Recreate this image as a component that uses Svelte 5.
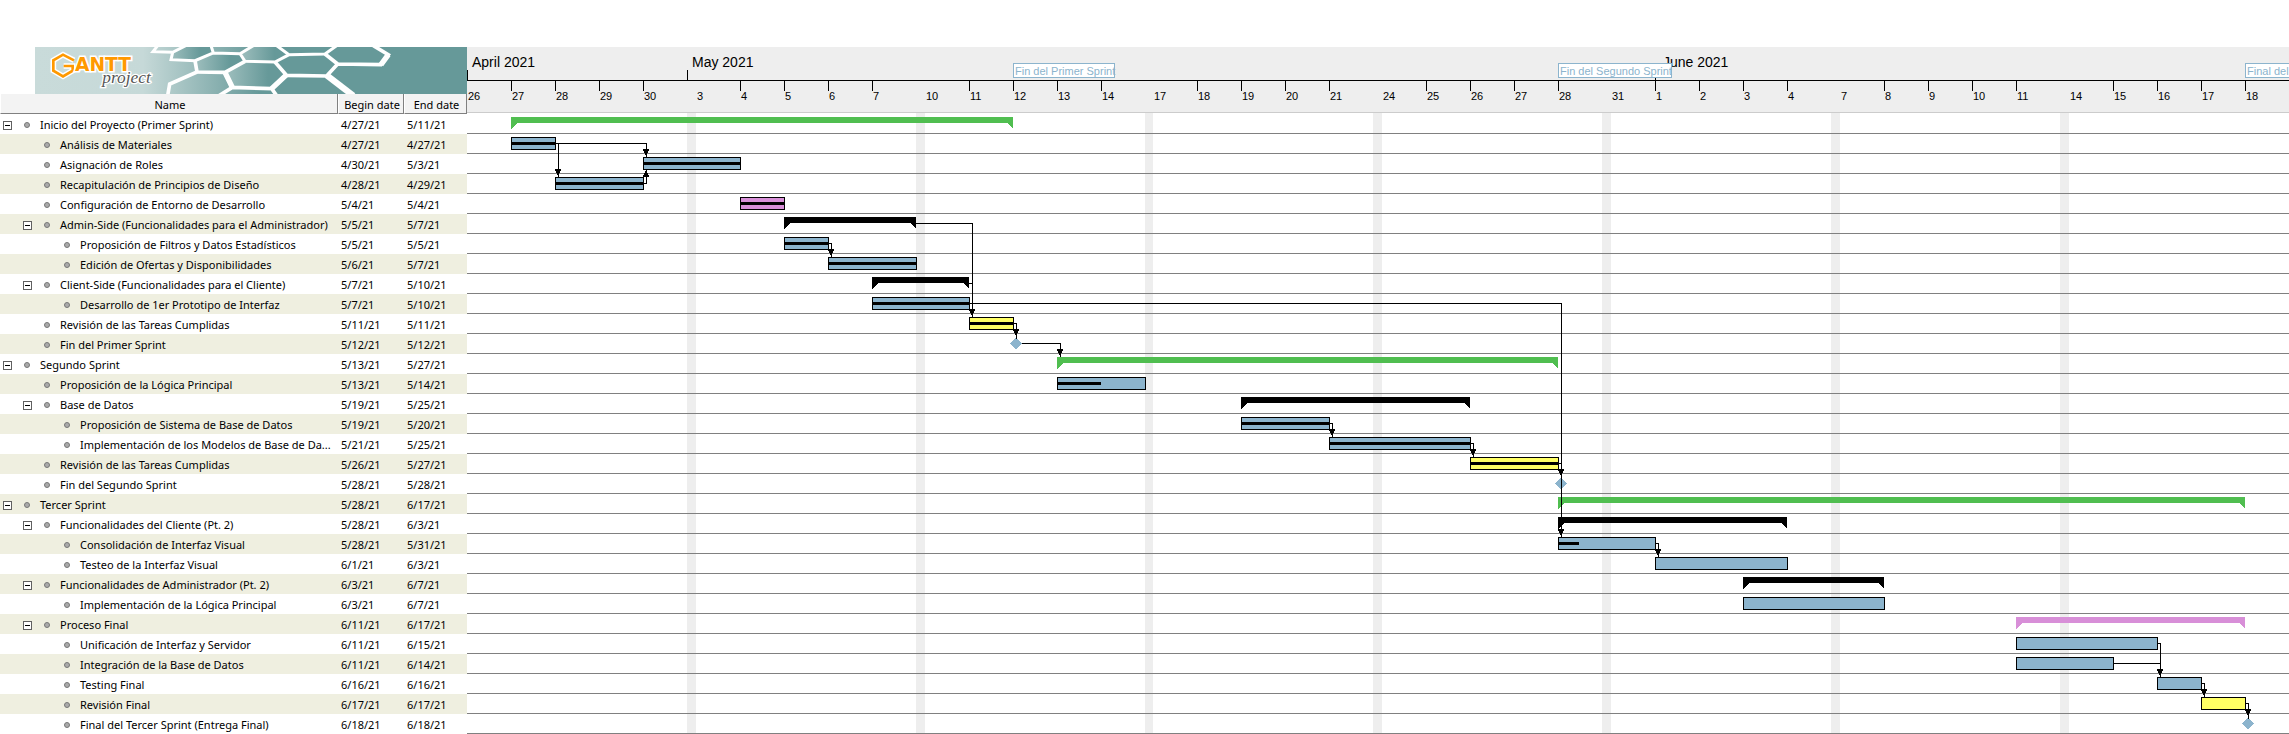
<script>
  const DAY = 44;
  const WEEK = 228.8;
  const ROW = 20;
  const TOP = 67;

  // Position of a working day: week index counted from April 26, day 0 = Monday, day 5 = start of the weekend.
  const at = (week, day) => Math.round(week * WEEK + day * DAY);

  // kind: sum = summary bracket, bar = task bar, mile = milestone
  const tasks = [
    { name: 'Inicio del Proyecto (Primer Sprint)', b: '4/27/21', e: '5/11/21', level: 0, open: true, kind: 'sum', color: 'green', s: [0, 1], f: [2, 2] },
    { name: 'Análisis de Materiales', b: '4/27/21', e: '4/27/21', level: 1, kind: 'bar', color: 'blue', s: [0, 1], f: [0, 2], done: 1 },
    { name: 'Asignación de Roles', b: '4/30/21', e: '5/3/21', level: 1, kind: 'bar', color: 'blue', s: [0, 4], f: [1, 1], done: 1 },
    { name: 'Recapitulación de Principios de Diseño', b: '4/28/21', e: '4/29/21', level: 1, kind: 'bar', color: 'blue', s: [0, 2], f: [0, 4], done: 1 },
    { name: 'Configuración de Entorno de Desarrollo', b: '5/4/21', e: '5/4/21', level: 1, kind: 'bar', color: 'pink', s: [1, 1], f: [1, 2], done: 1 },
    { name: 'Admin-Side (Funcionalidades para el Administrador)', b: '5/5/21', e: '5/7/21', level: 1, open: true, kind: 'sum', color: 'black', s: [1, 2], f: [1, 5] },
    { name: 'Proposición de Filtros y Datos Estadísticos', b: '5/5/21', e: '5/5/21', level: 2, kind: 'bar', color: 'blue', s: [1, 2], f: [1, 3], done: 1 },
    { name: 'Edición de Ofertas y Disponibilidades', b: '5/6/21', e: '5/7/21', level: 2, kind: 'bar', color: 'blue', s: [1, 3], f: [1, 5], done: 1 },
    { name: 'Client-Side (Funcionalidades para el Cliente)', b: '5/7/21', e: '5/10/21', level: 1, open: true, kind: 'sum', color: 'black', s: [1, 4], f: [2, 1] },
    { name: 'Desarrollo de 1er Prototipo de Interfaz', b: '5/7/21', e: '5/10/21', level: 2, kind: 'bar', color: 'blue', s: [1, 4], f: [2, 1], done: 1 },
    { name: 'Revisión de las Tareas Cumplidas', b: '5/11/21', e: '5/11/21', level: 1, kind: 'bar', color: 'yellow', s: [2, 1], f: [2, 2], done: 1 },
    { name: 'Fin del Primer Sprint', b: '5/12/21', e: '5/12/21', level: 1, kind: 'mile', color: 'blue', s: [2, 2], f: [2, 2] },
    { name: 'Segundo Sprint', b: '5/13/21', e: '5/27/21', level: 0, open: true, kind: 'sum', color: 'green', s: [2, 3], f: [4, 4] },
    { name: 'Proposición de la Lógica Principal', b: '5/13/21', e: '5/14/21', level: 1, kind: 'bar', color: 'blue', s: [2, 3], f: [2, 5], done: 0.5 },
    { name: 'Base de Datos', b: '5/19/21', e: '5/25/21', level: 1, open: true, kind: 'sum', color: 'black', s: [3, 2], f: [4, 2] },
    { name: 'Proposición de Sistema de Base de Datos', b: '5/19/21', e: '5/20/21', level: 2, kind: 'bar', color: 'blue', s: [3, 2], f: [3, 4], done: 1 },
    { name: 'Implementación de los Modelos de Base de Da...', b: '5/21/21', e: '5/25/21', level: 2, kind: 'bar', color: 'blue', s: [3, 4], f: [4, 2], done: 1 },
    { name: 'Revisión de las Tareas Cumplidas', b: '5/26/21', e: '5/27/21', level: 1, kind: 'bar', color: 'yellow', s: [4, 2], f: [4, 4], done: 1 },
    { name: 'Fin del Segundo Sprint', b: '5/28/21', e: '5/28/21', level: 1, kind: 'mile', color: 'blue', s: [4, 4], f: [4, 4] },
    { name: 'Tercer Sprint', b: '5/28/21', e: '6/17/21', level: 0, open: true, kind: 'sum', color: 'green', s: [4, 4], f: [7, 4] },
    { name: 'Funcionalidades del Cliente (Pt. 2)', b: '5/28/21', e: '6/3/21', level: 1, open: true, kind: 'sum', color: 'black', s: [4, 4], f: [5, 4] },
    { name: 'Consolidación de Interfaz Visual', b: '5/28/21', e: '5/31/21', level: 2, kind: 'bar', color: 'blue', s: [4, 4], f: [5, 1], done: 0.22 },
    { name: 'Testeo de la Interfaz Visual', b: '6/1/21', e: '6/3/21', level: 2, kind: 'bar', color: 'blue', s: [5, 1], f: [5, 4], done: 0 },
    { name: 'Funcionalidades de Administrador (Pt. 2)', b: '6/3/21', e: '6/7/21', level: 1, open: true, kind: 'sum', color: 'black', s: [5, 3], f: [6, 1] },
    { name: 'Implementación de la Lógica Principal', b: '6/3/21', e: '6/7/21', level: 2, kind: 'bar', color: 'blue', s: [5, 3], f: [6, 1], done: 0 },
    { name: 'Proceso Final', b: '6/11/21', e: '6/17/21', level: 1, open: true, kind: 'sum', color: 'pink', s: [6, 4], f: [7, 4] },
    { name: 'Unificación de Interfaz y Servidor', b: '6/11/21', e: '6/15/21', level: 2, kind: 'bar', color: 'blue', s: [6, 4], f: [7, 2], done: 0 },
    { name: 'Integración de la Base de Datos', b: '6/11/21', e: '6/14/21', level: 2, kind: 'bar', color: 'blue', s: [6, 4], f: [7, 1], done: 0 },
    { name: 'Testing Final', b: '6/16/21', e: '6/16/21', level: 2, kind: 'bar', color: 'blue', s: [7, 2], f: [7, 3], done: 0 },
    { name: 'Revisión Final', b: '6/17/21', e: '6/17/21', level: 2, kind: 'bar', color: 'yellow', s: [7, 3], f: [7, 4], done: 0 },
    { name: 'Final del Tercer Sprint (Entrega Final)', b: '6/18/21', e: '6/18/21', level: 2, kind: 'mile', color: 'blue', s: [7, 4], f: [7, 4] }
  ];

  const items = tasks.map((t, i) => ({ ...t, x1: at(...t.s), x2: at(...t.f), y: TOP + i * ROW }));

  // Dependencies as [from row, to row]
  const links = [
    [1, 2], [1, 3], [3, 2], [5, 10], [6, 7], [8, 10], [9, 21], [10, 11], [11, 12],
    [15, 16], [16, 17], [17, 18], [21, 22], [26, 28], [27, 28], [28, 29], [29, 30]
  ].map(([from, to]) => {
    const a = items[from];
    const b = items[to];
    const x = b.x1 + 3;
    const y = a.y + 9;
    const start = a.kind === 'mile' ? a.x2 + 9 : a.x2;
    const down = to > from;
    const end = down ? b.y + (b.kind === 'mile' ? 5 : 3) : b.y + 16;
    const tip = down
      ? `M${x - 3} ${b.y - 5}h6v2h-1l-1 4h-2l-1 -4h-1z`
      : `M${x - 3} ${b.y + 23}h6v-2h-1l-1 -4h-2l-1 4h-1z`;
    return { line: `M${start} ${y + 0.5}H${x + 0.5}V${end}`, tip };
  });

  const dayNumbers = [
    [26, 27, 28, 29, 30], [3, 4, 5, 6, 7], [10, 11, 12, 13, 14], [17, 18, 19, 20, 21],
    [24, 25, 26, 27, 28], [31, 1, 2, 3, 4], [7, 8, 9, 10, 11], [14, 15, 16, 17, 18]
  ];
  const days = dayNumbers.flatMap((week, w) => week.map((n, d) => ({ n, x: at(w, d), tick: d > 0 })));
  const weekends = [0, 1, 2, 3, 4, 5, 6].map((w) => ({ x: at(w, 5), w: at(w + 1, 0) - at(w, 5) }));
  const months = [
    { name: 'April 2021', x: 0, text: 5 },
    { name: 'May 2021', x: at(0, 5), text: at(0, 5) + 5 },
    { name: 'June 2021', x: at(5, 1), text: at(5, 1) + 8 }
  ];
  const flags = [
    { name: 'Fin del Primer Sprint', x: at(2, 2), w: 101 },
    { name: 'Fin del Segundo Sprint', x: at(4, 4), w: 113 },
    { name: 'Final del Tercer Sprint (Entrega Final)', x: at(7, 4), w: 190 }
  ];
</script>

<main>
  <section class="tree">
    <svg class="banner" viewBox="-330 9 1296 141" preserveAspectRatio="none" role="img" aria-label="GanttProject">
      <defs>
        <linearGradient id="sea" x1="0" x2="1">
          <stop offset="0" stop-color="#c9dbda" />
          <stop offset="0.25" stop-color="#c6d9d8" />
          <stop offset="0.52" stop-color="#669999" />
          <stop offset="1" stop-color="#669999" />
        </linearGradient>
        <linearGradient id="cell" x1="0" x2="1">
          <stop offset="0" stop-color="#9fbfbe" />
          <stop offset="0.7" stop-color="#669999" />
        </linearGradient>
      </defs>
      <rect x="-330" y="9" width="1296" height="141" fill="url(#sea)" />
      <g fill="url(#cell)">
        <path d="M83 27L115 9H200L205 27L150 50L77 48Z" />
        <path d="M150 50L205 27L285 29L300 52L240 85L158 84Z" />
        <path d="M285 29L320 9H400L432 32L390 54L300 52Z" />
        <path d="M240 85L300 52L390 54L425 92L380 134L262 130Z" />
      </g>
      <g fill="none" stroke="#fff" stroke-width="11" stroke-linejoin="miter">
        <path d="M38 5L24 23L83 25L122 5M83 25L78 47L150 50L205 27L198 5M205 27L285 29L325 5M285 29L300 52L390 54L432 32L395 5M432 32L540 30L575 5" stroke-width="9" />
        <path d="M150 50L156 84L240 85L300 52M390 54L425 94L545 96L578 60L540 30M578 60L708 62L730 32L685 5" />
        <path d="M156 84L74 120L68 155M240 85L262 130L380 134L425 92M262 130L222 155M380 134L395 155" />
        <path d="M545 94L625 155" stroke-width="19" />
        <path d="M425 92L380 134M708 62L730 32M240 85L262 130" stroke-width="16" />
      </g>
      <g transform="translate(-330 0)">
        <path d="M117 49L84 32L55 49V80L84 97L113 80V66H86" fill="none" stroke="#fff" stroke-width="17" />
        <path d="M117 49L84 32L55 49V80L84 97L113 80V66H86" fill="none" stroke="#ff9900" stroke-width="8" />
        <text class="word" x="120" y="80">ANTT</text>
        <text class="script" x="202" y="116">project</text>
      </g>
    </svg>

    <table>
      <colgroup>
        <col />
        <col class="begin" />
        <col class="end" />
      </colgroup>
      <thead>
        <tr><th scope="col">Name</th><th scope="col">Begin date</th><th scope="col">End date</th></tr>
      </thead>
      <tbody>
        {#each tasks as t}
          <tr>
            <td>
              <div class="task level{t.level}">
                {#if t.open}
                  <button type="button" aria-label="Collapse {t.name}"></button>
                {:else}
                  <i class="leaf"></i>
                {/if}
                <i class="dot"></i>
                <span>{t.name}</span>
              </div>
            </td>
            <td>{t.b}</td>
            <td>{t.e}</td>
          </tr>
        {/each}
      </tbody>
    </table>
  </section>

  <section class="chart">
    <svg height={TOP + ROW * tasks.length} shape-rendering="crispEdges" role="img" aria-label="Gantt chart">
      <rect class="head" width="100%" height="65" />
      <rect class="head-edge" y="65" width="100%" height="1" />
      {#each weekends as w}
        <rect class="weekend" x={w.x} y="66" width={w.w} height="100%" />
      {/each}
      {#each items as t}
        <rect class="rule" y={t.y + 19} width="100%" height="1" />
      {/each}

      <rect y="33" width="100%" height="1" />
      {#each months as m}
        <rect x={m.x} y="23" width="1" height="10" />
        <text class="month" x={m.text} y="20">{m.name}</text>
      {/each}
      {#each days as d}
        {#if d.tick}
          <rect x={d.x} y="33" width="1" height="11" />
        {/if}
        <text class="day" x={d.x + 1} y="53">{d.n}</text>
      {/each}
      {#each flags as f}
        <rect class="flag" x={f.x + 0.5} y="16.5" width={f.w} height="14" />
        <text class="flag-text" x={f.x + 2} y="28">{f.name}</text>
      {/each}

      {#each items as t}
        {#if t.kind === 'sum'}
          <path class={t.color} d="M{t.x1} {t.y + 3}H{t.x2}v12l-6 -6H{t.x1 + 6}l-6 6z" />
        {:else if t.kind === 'bar'}
          <rect class="bar {t.color}" x={t.x1 + 0.5} y={t.y + 3.5} width={t.x2 - t.x1} height="12" />
          <rect x={t.x1} y={t.y + 8} width={(t.x2 - t.x1) * t.done} height="3" />
        {:else}
          <path class={t.color} d="M{t.x1 + 3} {t.y + 3}l6 6.5l-6 6l-6 -6z" />
        {/if}
      {/each}
      {#each links as l}
        <path class="link" d={l.line} />
        <path d={l.tip} />
      {/each}
    </svg>
  </section>
</main>

<style>
  :global(body) {
    margin: 0;
    background: #fff;
  }
  main {
    display: flex;
    align-items: flex-start;
    padding-top: 47px;
    color: #000;
    font-family: "Noto Sans", "Open Sans", sans-serif;
    font-size: 11px;
  }
  .tree {
    flex: none;
    width: 467px;
  }
  .banner {
    display: block;
    height: 47px;
    width: 432px;
    margin-left: 35px;
  }
  .word {
    font: bold 56px "DejaVu Sans", sans-serif;
    fill: #ff9900;
    stroke: #fff;
    stroke-width: 9px;
    paint-order: stroke;
  }
  .script {
    font: italic 52px "Liberation Serif", serif;
    fill: #555;
    stroke: #fff;
    stroke-width: 8px;
    paint-order: stroke;
  }
  table {
    width: 100%;
    table-layout: fixed;
    border-collapse: separate;
    border-spacing: 0;
  }
  .begin {
    width: 66px;
  }
  .end {
    width: 63px;
  }
  th {
    box-sizing: border-box;
    height: 20px;
    padding: 2px 0 0 2px;
    border-right: 1px solid #808080;
    border-bottom: 1px solid #808080;
    border-left: 1px solid #fff;
    background: #f3f3f3;
    font-weight: 400;
    line-height: 17px;
  }
  td {
    box-sizing: border-box;
    height: 20px;
    padding: 2px 0 0 3px;
    line-height: 18px;
    white-space: nowrap;
  }
  tbody tr:nth-child(even) {
    background: #efefe0;
  }
  .task {
    display: flex;
    align-items: center;
  }
  .level1 {
    padding-left: 20px;
  }
  .level2 {
    padding-left: 40px;
  }
  button {
    width: 9px;
    height: 9px;
    padding: 0;
    border: 1px solid #606060;
    background: linear-gradient(#000, #000) center / 5px 1px no-repeat #fff;
  }
  .leaf {
    width: 9px;
  }
  .dot {
    box-sizing: border-box;
    width: 6px;
    height: 6px;
    margin: 0 10px 0 12px;
    border: 1px solid #777;
    border-radius: 50%;
    background: #aaa;
  }
  .chart {
    flex: 1;
    min-width: 0;
  }
  .chart svg {
    display: block;
    width: 100%;
    overflow: hidden;
  }
  .head,
  .weekend {
    fill: #eeeeee;
  }
  .head-edge {
    fill: #cccccc;
  }
  .rule {
    fill: #808080;
  }
  .month {
    font: 14px "Liberation Sans", Arial, sans-serif;
  }
  .day {
    font: 11px "Liberation Sans", Arial, sans-serif;
  }
  .flag {
    fill: #fff;
    stroke: #8cb4cd;
  }
  .flag-text {
    font: 11px "Liberation Sans", Arial, sans-serif;
    fill: #8cb4cd;
  }
  .blue {
    fill: #8cb4cd;
  }
  .green {
    fill: #50be50;
  }
  .pink {
    fill: #d88fd8;
  }
  .yellow {
    fill: #ffff64;
  }
  .black {
    fill: #000;
  }
  .bar {
    stroke: #000;
  }
  .link {
    fill: none;
    stroke: #000;
  }
</style>
